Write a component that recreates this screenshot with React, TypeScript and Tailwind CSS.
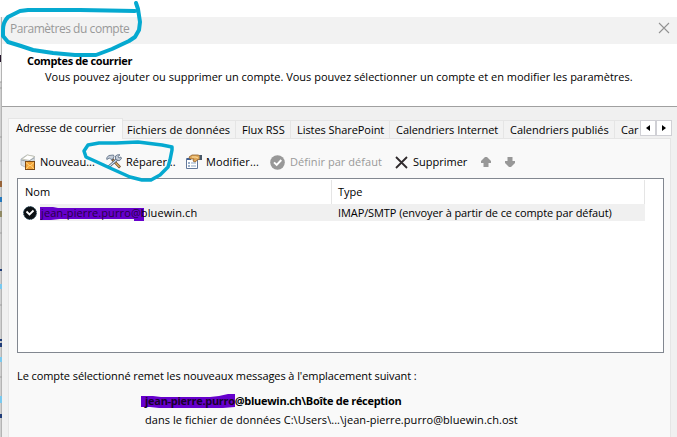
import type { ReactNode } from "react";

const tabs = [
  { label: "Fichiers de données", className: "w-[113px] tracking-[0.05px]" },
  { label: "Flux RSS", className: "w-[55px] tracking-[0px]" },
  { label: "Listes SharePoint", className: "w-[99px] tracking-[-0.06px]" },
  { label: "Calendriers Internet", className: "w-[114px] tracking-[-0.03px]" },
  { label: "Calendriers publiés", className: "w-[111px] tracking-[0px]" },
];

function NewMailIcon() {
  return (
    <svg width="16" height="16" viewBox="0 0 16 16">
      <path d="M1 5L7 1L14.5 2.5L14 9L6 13.5L1 11z" fill="#d9dee3" stroke="#a9b1b9" strokeWidth=".8" />
      <path d="M2 5L7.5 1L14.5 2.5L10 6.5z" fill="#fff" stroke="#b9b9a4" strokeWidth=".7" />
      <path d="M1 6L8 7.5L14 4" stroke="#9aa5b0" fill="none" />
      <rect x="5.5" y="7.5" width="9" height="8" fill="#f3a43a" stroke="#7d4a16" />
      <path d="M6 8.5L10 12L14 8.5M6 15L9 11.5M14 15L11 11.5" stroke="#ffd782" fill="none" />
    </svg>
  );
}

function RepairIcon() {
  return (
    <svg width="16" height="16" viewBox="0 0 16 16" fill="none">
      <path d="M6 5L14 13.5" stroke="#684628" strokeWidth="2.6" />
      <path d="M7 6L13.5 13" stroke="#ddb064" strokeWidth="1.2" />
      <path d="M2 13.5L11.5 5" stroke="#405064" strokeWidth="2.6" />
      <path d="M2.5 13L11.5 5" stroke="#d8e6f2" strokeWidth="1.2" />
      <path d="M0.8 5.5V3.5L3 1.5L7.5 1L8 2.5L7 5L5 5.5L3.5 4z" fill="#c3ccd8" stroke="#65758a" strokeWidth=".9" />
      <path d="M9.5 5V2L11.5 0.8H14L12 2.5L13 4L15 3L15.3 5L13 6.8L11 6z" fill="#c3ccd8" stroke="#65758a" strokeWidth=".9" />
    </svg>
  );
}

function EditIcon() {
  return (
    <svg width="16" height="16" viewBox="0 0 16 16" fill="none">
      <path d="M0.5 4.5H11.5V14.5H0.5z" fill="#fff" stroke="#62789a" />
      <path d="M1 5H5" stroke="#3f5f92" strokeWidth="2" />
      <path d="M2 9H4M2 12H4" stroke="#375f91" />
      <path d="M5 9H10M5 12H10" stroke="#8da7c4" />
      <path d="M3 3L6 1H12L14.5 2V5.5L12 5.5L9 8L7 7L8 5L4 5z" fill="#e0a85a" stroke="#91602a" strokeWidth=".8" />
      <path d="M6 3H10L12 4" stroke="#ffe1a1" />
      <path d="M13.5 1H16V6H13.5z" fill="#4a5969" />
    </svg>
  );
}

function DefaultIcon() {
  return (
    <svg width="15" height="15" viewBox="0 0 15 15">
      <circle cx="7.5" cy="7.5" r="7.3" fill="#989898" />
      <path d="M4 7.3L6.7 10L11.3 5" stroke="#fff" strokeWidth="1.9" fill="none" />
    </svg>
  );
}

function AccountIcon() {
  return (
    <svg width="14" height="14" viewBox="0 0 14 14">
      <circle cx="7" cy="7" r="6.5" fill="#0b1014" stroke="#29495b" strokeDasharray="1.5 1" />
      <path d="M3.5 5.5L6.5 8.5L10.5 4.5" stroke="#fff" strokeWidth="1.8" fill="none" />
    </svg>
  );
}

function Arrow({ down }: { down?: boolean }) {
  return (
    <svg width="10" height="10" viewBox="0 0 10 10" className={down ? "rotate-180" : ""}>
      <path d="M4 0H6L10 4V6H7.5V10H2.5V6H0V4z" fill="#989898" />
    </svg>
  );
}

function Tool(props: { className: string; icon: ReactNode; children: ReactNode }) {
  return (
    <div className={`flex h-4 shrink-0 items-center ${props.className}`}>
      {props.icon}
      <span>{props.children}</span>
    </div>
  );
}

// Slice of the window that sits behind the dialog
function Backdrop() {
  return (
    <svg className="w-[2px] h-[437px] shrink-0" viewBox="0 0 2 437">
      <path d="M0 0H2V17H0z" fill="#fff" />
      <path d="M0 17H2V437H0z" fill="#d0d0d0" />
      <path d="M0 17H1V82H0z" fill="#f0f0f0" />
      <path d="M1 17H2V437H1z" fill="#b4b4b4" />
      <path d="M0 55H1V62H0z" fill="#24132a" />
      <path d="M0 82H2M0 88H2M0 137H2M0 161H2M0 233H2M0 305H2M0 377H2" stroke="#a0a0a0" />
      <path d="M0 181H2V187H0z" fill="#98643a" />
      <path d="M0 197H2V202H0z" fill="#2478bd" />
      <path d="M0 211H2V217H0z" fill="#908a65" />
      <path d="M0 269H2V271H0zM0 339H2V341H0zM0 343H2V347H0zM0 414H2V418H0z" fill="#213d78" />
      <path d="M0 284H2V289H0zM0 357H2V362H0zM0 396H2V403H0z" fill="#79c9ef" />
    </svg>
  );
}

export default function App() {
  return (
    <div className="relative flex h-[437px] w-[677px] overflow-hidden bg-white font-['Open_Sans','Noto_Sans',sans-serif] text-[11px] leading-4 text-black whitespace-nowrap">
      <Backdrop />
      <div className="flex w-[675px] flex-col">
        <div className="mt-[17px] flex h-[27px] shrink-0 items-start justify-between bg-[#f2f2f2] pl-2 pr-[7px] text-[12px] text-[#999]">
          <span className="mt-[4px] tracking-[-0.45px]">Paramètres du compte</span>
          <svg width="12" height="12" viewBox="0 0 12 12" className="mt-[5px]">
            <path d="M1 1L11 11M11 1L1 11" stroke="#929292" strokeWidth="1.1" />
          </svg>
        </div>
        <div className="h-[63px] shrink-0 border-b border-[#a0a0a0] bg-white pt-[9px] pl-[25px]">
          <h1 className="font-bold tracking-[-0.37px]">Comptes de courrier</h1>
          <p className="pl-[18px] tracking-[0px]">
            Vous pouvez ajouter ou supprimer un compte. Vous pouvez sélectionner un compte et en modifier les paramètres.
          </p>
        </div>

        <div className="flex h-[330px] flex-col bg-[#f0f0f0] pt-[11px] pl-[6px]">
          <div className="z-10 flex h-[21px] shrink-0 items-end">
            <div className="h-[21px] w-[115px] shrink-0 border border-b-0 border-[#e5e5e5] bg-[#f9f9f9] pt-px pl-[7px] tracking-[-0.07px]">
              Adresse de courrier
            </div>
            {tabs.map((tab) => (
              <div
                key={tab.label}
                className={`h-[19px] shrink-0 border-t border-r border-b border-[#e5e5e5] bg-[#f2f2f2] pt-px pl-[4px] [&+div]:pl-[6px] ${tab.className}`}
              >
                {tab.label}
              </div>
            ))}
            <div className="h-[19px] w-[25px] shrink-0 overflow-hidden border-t border-b border-[#e5e5e5] bg-[#f2f2f2] pt-px pl-[6px]">Car</div>
            <div className="mb-[3px] flex h-4 shrink-0">
              <div className="flex w-4 items-center justify-center border border-[#d0d0d5] bg-white">
                <svg width="4" height="6"><path d="M4 0V6L0 3z" /></svg>
              </div>
              <div className="flex w-4 items-center justify-center border border-[#d0d0d5] bg-white">
                <svg width="4" height="6"><path d="M0 0V6L4 3z" /></svg>
              </div>
            </div>
          </div>

          <div className="-mt-px flex h-[299px] w-[663px] flex-col border border-b-0 border-[#e5e5e5] bg-[#f9f9f9] pl-2">
            <div className="mt-[15px] flex h-4 shrink-0 items-center pl-[3px]">
              <Tool className="w-[86px] gap-1" icon={<NewMailIcon />}>Nouveau...</Tool>
              <Tool className="w-[80px] gap-1" icon={<RepairIcon />}>Réparer...</Tool>
              <Tool className="w-[84px] gap-1 tracking-[0.1px]" icon={<EditIcon />}>Modifier...</Tool>
              <Tool className="w-[125px] gap-[5px] text-[#999] tracking-[0.05px]" icon={<DefaultIcon />}>Définir par défaut</Tool>
              <Tool
                className="w-[86px] gap-[5px]"
                icon={
                  <svg width="13" height="13" viewBox="0 0 13 13">
                    <path d="M1 1L12 12M12 1L1 12" stroke="#302b2d" strokeWidth="1.8" />
                  </svg>
                }
              >
                Supprimer
              </Tool>
              <div className="flex gap-[14px]">
                <Arrow />
                <Arrow down />
              </div>
            </div>

            <div className="mt-[8px] h-[175px] w-[647px] shrink-0 border border-[#828790] bg-white">
              <div className="mt-px flex h-6 w-[627px] border-r border-[#e5e5e5]">
                <div className="w-[314px] border-r border-[#e5e5e5] pt-[4px] pl-[7px]">Nom</div>
                <div className="pt-[4px] pl-[6px]">Type</div>
              </div>
              <div className="flex h-[17px] w-[627px] items-center pl-[5px]">
                <AccountIcon />
                <div className="ml-[3px] flex h-[17px] w-[605px] bg-[#f0f0f0] pt-px pl-px">
                  <span className="relative w-[297px] tracking-[0.1px]">
                    <svg className="absolute -left-px top-0" width="106" height="18" viewBox="0 0 106 18">
                      <path d="M0 2H13L18 3H104V16H94V14H20L11 15H0z" fill="#6600cc" />
                    </svg>
                    <span className="relative"><span className="text-[#260044]">jean-pierre.purro@</span>bluewin.ch</span>
                  </span>
                  <span className="tracking-[-0.09px]">IMAP/SMTP (envoyer à partir de ce compte par défaut)</span>
                </div>
              </div>
            </div>

            <p className="mt-[15px] tracking-[-0.08px]">Le compte sélectionné remet les nouveaux messages à l'emplacement suivant :</p>
            <div className="mt-[9px] pl-[128px]">
              <p className="relative font-bold tracking-[-0.29px]">
                <svg className="absolute -left-1 top-0" width="95" height="17" viewBox="0 0 95 17">
                  <path d="M0 3H12L20 4H69L78 3L87 1H94V14L82 15H18L9 14H0z" fill="#6600cc" />
                </svg>
                <span className="relative"><span className="text-[#19002d]">jean-pierre.purro</span>@bluewin.ch\Boîte de réception</span>
              </p>
              <p className="mt-[3px] tracking-[0.05px]">dans le fichier de données C:\Users\...\jean-pierre.purro@bluewin.ch.ost</p>
            </div>
          </div>
        </div>
      </div>

      {/* Pen marks drawn over the dialog */}
      <svg className="absolute inset-0 z-20" width="677" height="437" fill="none" stroke="#05a9d0" strokeWidth="4" strokeLinecap="round" strokeLinejoin="round">
        <path d="M135 11L80 10H28L20 11L8 17Q3 22 3 30V36L8 42L21 46L33 50L53 53L75 55H96L112 49L129 41L135 37L139 30L140 22L138 9L136 3" />
        <path d="M172 150V147L162 145L146 143L138 142L116 143H99L88 145L84 151L86 157L97 162L110 168L130 177L142 180L151 180L160 175L168 167L170 160L172 150" strokeWidth="3.5" />
      </svg>
    </div>
  );
}
